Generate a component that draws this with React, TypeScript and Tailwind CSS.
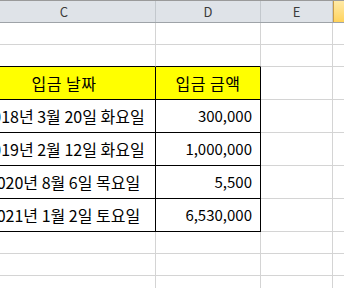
const font = { fontFamily: '"Noto Sans CJK KR", "Noto Sans", sans-serif' };

const rows = [
  { date: "2018년 3월 20일 화요일", amount: "300,000" },
  { date: "2019년 2월 12일 화요일", amount: "1,000,000" },
  { date: "2020년 8월 6일 목요일", amount: "5,500" },
  { date: "2021년 1월 2일 토요일", amount: "6,530,000" },
];

const EmptyRow = () => (
  <div className="flex h-[22px]">
    <div className="w-[183px] shrink-0 border-r border-b border-[#d4d4d4]" />
    <div className="w-[105px] shrink-0 border-r border-b border-[#d4d4d4]" />
    <div className="w-[72px] shrink-0 border-r border-b border-[#d4d4d4]" />
    <div className="w-[40px] shrink-0 border-b border-[#d4d4d4]" />
  </div>
);

export default function App() {
  return (
    <div className="h-[288px] w-[344px] overflow-hidden bg-white text-black" style={font}>
      <div className="-ml-[27px] w-[400px]">
        {/* column headers */}
        <div className="flex h-[23px] border-t border-b border-t-[#9a9a9a] border-b-[#9ea3a8] bg-[#dfe3e8] text-[13px] leading-[21px] text-[#3b3b3b]">
          <div className="w-[183px] shrink-0 border-r border-[#c3c8cd] text-center">C</div>
          <div className="w-[105px] shrink-0 border-r border-[#c3c8cd] text-center">D</div>
          <div className="w-[72px] shrink-0 border-r border-[#c3c8cd] text-center">E</div>
          <div className="w-[40px] shrink-0 border-l border-[#c89b48] bg-gradient-to-b from-[#ffeaa6] to-[#ffd35a]" />
        </div>

        <EmptyRow />
        <div className="flex h-[22px]">
          <div className="w-[183px] shrink-0 border-r border-b border-r-[#d4d4d4] border-b-black" />
          <div className="w-[105px] shrink-0 border-r border-b border-r-[#d4d4d4] border-b-black" />
          <div className="w-[72px] shrink-0 border-r border-b border-[#d4d4d4]" />
          <div className="w-[40px] shrink-0 border-b border-[#d4d4d4]" />
        </div>

        {/* table header */}
        <div className="flex h-[33px] text-[16px]">
          <div className="flex w-[183px] shrink-0 items-center justify-center border-r border-b border-black bg-[#ffff00] tracking-[0.5px]">입금 날짜</div>
          <div className="flex w-[105px] shrink-0 items-center justify-center border-r border-b border-black bg-[#ffff00] tracking-[0.5px]">입금 금액</div>
          <div className="w-[72px] shrink-0 border-r border-b border-[#d4d4d4]" />
          <div className="w-[40px] shrink-0 border-b border-[#d4d4d4]" />
        </div>

        {rows.map((r) => (
          <div key={r.date} className="flex h-[33px]">
            <div className="flex w-[183px] shrink-0 items-center justify-center whitespace-nowrap border-r border-b border-black text-[16px]">{r.date}</div>
            <div className="flex w-[105px] shrink-0 items-center justify-end border-r border-b border-black pr-[8px] text-[15px]">{r.amount}</div>
            <div className="w-[72px] shrink-0 border-r border-b border-[#d4d4d4]" />
            <div className="w-[40px] shrink-0 border-b border-[#d4d4d4]" />
          </div>
        ))}

        <EmptyRow />
        <EmptyRow />
        <EmptyRow />
      </div>
    </div>
  );
}
